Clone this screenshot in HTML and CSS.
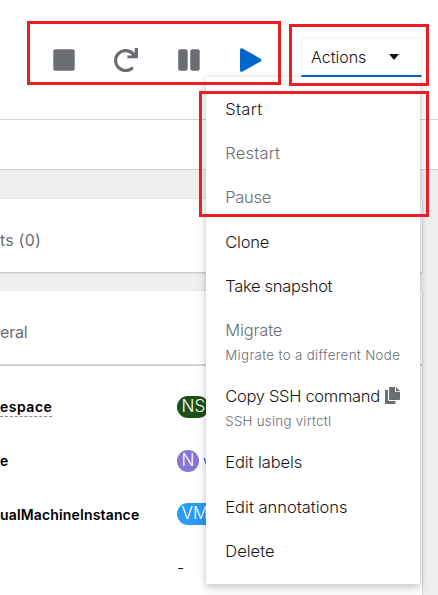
FILE: index.html
```html
<!DOCTYPE html>
<html lang="en">
<head>
<meta charset="utf-8">
<title>Virtual machine actions</title>
<link rel="stylesheet" href="styles.css">
</head>
<body>
<div class="page">
  <header class="header">
    <div class="controls">
      <svg width="22" height="22" viewBox="0 0 22 22"><rect x=".3" y=".3" width="21.4" height="21.4" rx="2" fill="#6a6e73"/></svg>
      <svg width="24" height="24" viewBox="0 0 24 24"><path d="M17.6 4.6A10 10 0 1 0 17.8 20.4" fill="none" stroke="#6a6e73" stroke-width="3.2" stroke-linecap="round"/><path d="M20.7 0H24V10.3H13.4V7.4H18L15.5 4.3L17.5 2.5L20.7 4.8Z" fill="#6a6e73"/></svg>
      <svg width="22" height="22" viewBox="0 0 22 22"><rect x=".2" y=".3" width="9.5" height="21.4" rx="2" fill="#6a6e73"/><rect x="12.2" y=".3" width="9.5" height="21.4" rx="2" fill="#6a6e73"/></svg>
      <svg width="22" height="24" viewBox="0 0 22 24"><path d="M0 2Q0-.8 2.6.6L20.6 10.7Q22.4 12 20.6 13.4L2.6 23.5Q0 24.7 0 22Z" fill="#06c"/></svg>
    </div>
    <div class="toggle"><span>Actions</span><i class="caret"></i></div>
  </header>
  <div class="tabs"></div>
  <main class="content">
    <section class="card alerts"><h2>ts (0)</h2></section>
    <section class="card general">
      <h2>eral</h2>
      <dl>
        <dt><span class="hint">espace</span></dt><dd><span class="badge ns">NS</span></dd>
        <dt><span>e</span></dt><dd><span class="badge node">N</span><a>v</a></dd>
        <dt><span class="instance">ualMachineInstance</span></dt><dd><span class="badge vm">VM</span></dd>
        <dt></dt><dd class="empty">-</dd>
      </dl>
    </section>
  </main>
  <ul class="menu">
    <li class="start">Start</li>
    <li class="off restart">Restart</li>
    <li class="off pause">Pause</li>
    <li class="clone">Clone</li>
    <li class="snapshot">Take snapshot</li>
    <li class="off migrate">Migrate<small class="migrate-note">Migrate to a different Node</small></li>
    <li class="copy"><span>Copy SSH command</span><svg class="copy-icon" width="15" height="17" viewBox="0 0 15 17"><path d="M0 3.5Q0 3 .6 3H3V12.5Q3 14 4.5 14H10.5V16Q10.5 17 9.8 17H1Q0 17 0 16Z"/><path d="M4 .8Q4 0 4.8 0H10V4.8H15V12Q15 13 14.1 13H4.8Q4 13 4 12Z"/><path d="M11 0L15 4H11Z"/></svg><small class="ssh-note">SSH using virtctl</small></li>
    <li class="labels">Edit labels</li>
    <li class="annotations">Edit annotations</li>
    <li class="delete">Delete</li>
  </ul>
  <div class="mark mark-controls"></div>
  <div class="mark mark-toggle"></div>
  <div class="mark mark-items"></div>
</div>
</body>
</html>
```
FILE: styles.css
```css
* { box-sizing: border-box; }
body { margin: 0; font-family: Inter, "Noto Sans", sans-serif; font-weight: 300; font-size: 16px; color: #151515; background: #fff; }
svg { display: block; }
.page { position: relative; width: 438px; height: 595px; overflow: hidden; background: #efefef; }
.header { height: 120px; background: #fff; border-bottom: 1px solid #d2d2d2; display: flex; align-items: flex-start; padding: 37px 16px 0 53px; justify-content: space-between; }
.controls { display: grid; grid-template-columns: 61px 64px 62.3px 22px; height: 46px; align-items: center; }
.toggle { width: 121px; height: 40px; border: 1px solid #f0f0f0; border-bottom: 2px solid #06c; display: flex; align-items: center; padding: 0 22px 0 9px; justify-content: space-between; }
.caret { border: 5px solid transparent; border-top: 6px solid #151515; border-bottom: 0; }
.tabs { height: 50px; background: #fff; border-bottom: 1px solid #d2d2d2; }
.content { padding: 29px 16px 0 0; display: grid; gap: 19px; }
.card { background: #fff; box-shadow: 0 1px 2px rgba(3,3,3,.2), 0 0 2px rgba(3,3,3,.06); }
.alerts { height: 73px; padding-top: 31px; }
.alerts h2 { letter-spacing: .2px; }
.general { height: 330px; }
h2 { margin: 0; font-size: 16px; line-height: 21px; font-weight: 400; color: #6a6e73; }
.general h2 { height: 75px; padding-top: 31px; border-bottom: 2px solid #d2d2d2; letter-spacing: -.2px; }
dl { margin: 14px 0 0; display: grid; grid-template-columns: 177px 1fr; grid-auto-rows: 53.7px; align-items: center; }
dt { font-weight: 600; font-size: 14px; color: #000; }
dd { margin: 0; display: flex; align-items: center; font-size: 16px; }
dd a { color: #06c; font-size: 14px; font-weight: 400; margin-left: 4px; }
.hint { display: inline-block; line-height: 19px; border-bottom: 1px dashed #8a8d90; letter-spacing: .5px; }
.instance { letter-spacing: .15px; }
.empty { line-height: 18px; position: relative; top: -1px; }
.badge { height: 22px; line-height: 20px; border-radius: 11px; color: #fff; padding: 0 4.5px; min-width: 22px; font-size: 17px; }
.ns { background: #1e4f18; width: 32px; }
.node { background: #8476d1; }
.vm { background: #2b9af3; width: 46px; }
.menu { position: absolute; left: 206px; top: 77px; width: 214px; height: 507px; margin: 0; padding: 9px 0 0 19.3px; list-style: none; background: #fff; box-shadow: 0 5px 9px rgba(3,3,3,.15), 0 0 6px rgba(3,3,3,.12); display: grid; grid-template-rows: 44px 44px 45px 44px 44px 66px 66px 45px 44px 45px; font-size: 16.5px; line-height: 22px; white-space: nowrap; }
.menu li { padding-top: 12px; }
.off { color: #6a6e73; }
.start { letter-spacing: .3px; }
.restart { letter-spacing: .2px; }
.pause { letter-spacing: -.3px; }
.clone { letter-spacing: -.2px; }
.snapshot { letter-spacing: -.32px; }
.migrate { letter-spacing: -.15px; }
.labels { letter-spacing: -.1px; }
small { display: block; color: #6a6e73; font-size: 13.3px; line-height: 20px; margin-top: 4px; }
.migrate-note { letter-spacing: .34px; }
.ssh-note { letter-spacing: .26px; }
.copy { display: grid; grid-template-columns: 160px 15px; align-content: start; }
.copy span { letter-spacing: -.31px; }
.copy small { grid-column: 1 / -1; }
.copy-icon { fill: #6a6e73; margin-top: 2px; }
.mark { position: absolute; border: 3px solid #ed1c24; }
.mark-controls { left: 27px; top: 21px; width: 254px; height: 64px; }
.mark-toggle { left: 289px; top: 24px; width: 140px; height: 62px; }
.mark-items { left: 199px; top: 91px; width: 230px; height: 126px; }
```
